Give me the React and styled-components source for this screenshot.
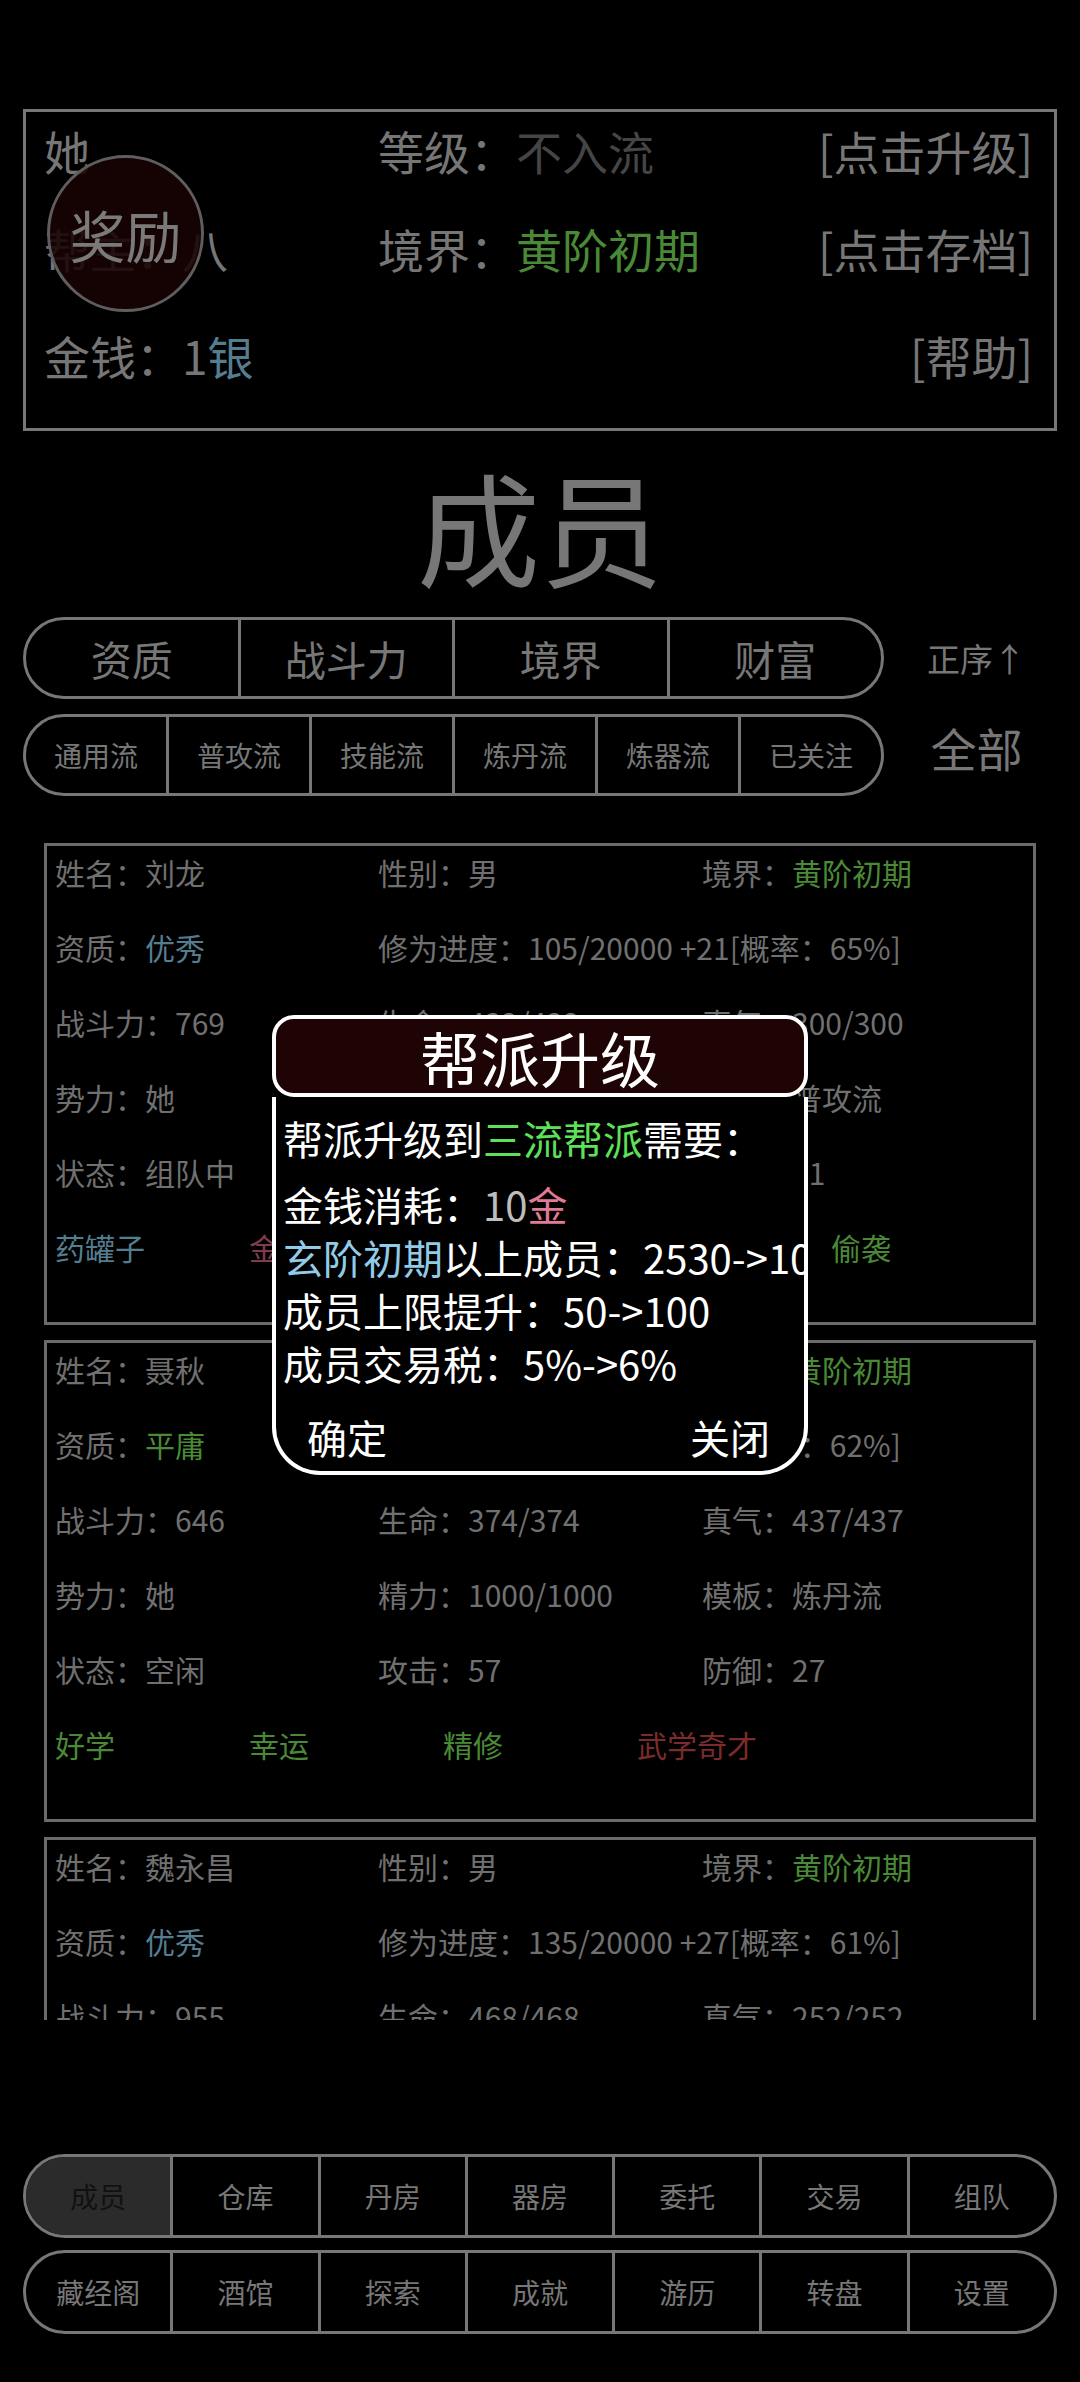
import React from "react";
import styled, { createGlobalStyle } from "styled-components";

const GlobalStyle = createGlobalStyle`
  html, body { margin: 0; padding: 0; background: #000; }
  body { font-family: "Noto Sans CJK SC", "Noto Sans", sans-serif; }
  * { box-sizing: border-box; }
`;

const C = {
  gray: "#767676",
  dim: "#454545",
  green: "#4a8a36",
  blue: "#557d90",
  pink: "#7e3c4c",
  red: "#7c2b2b",
};

const Page = styled.div`
  position: relative;
  width: 1080px;
  height: 2382px;
  padding: 109px 23px 0;
  background: #000;
  color: ${C.gray};
  overflow: hidden;
`;

const InfoBox = styled.div`
  position: relative;
  height: 322px;
  border: 3px solid #777;
  padding: 9px 21px 0 18px;
  display: grid;
  grid-template-columns: 334px 1fr auto;
  grid-template-rows: 98px 107px 58px;
  font-size: 46px;
  line-height: 58px;
  white-space: nowrap;
`;

const RightCell = styled.div`
  text-align: right;
`;

const Tone = styled.span`
  color: ${(p) => p.$c || "inherit"};
`;

const Reward = styled.div`
  position: absolute;
  left: 21px;
  top: 43px;
  width: 157px;
  height: 157px;
  border-radius: 50%;
  border: 3px solid #5e5e5e;
  background: rgba(24, 3, 3, 0.88);
  display: flex;
  align-items: center;
  justify-content: center;
  font-size: 56px;
  color: #7a7a7a;
`;

const Title = styled.div`
  height: 186px;
  line-height: 186px;
  text-align: center;
  font-size: 123px;
  color: #777;
`;

const BarRow = styled.div`
  display: grid;
  grid-template-columns: 861px 1fr;
  align-items: center;
  height: 82px;
  margin-top: ${(p) => p.$mt || 0}px;
`;

const Bar = styled.div`
  display: flex;
  height: ${(p) => p.$h || 82}px;
  border: 3px solid #777;
  border-radius: 44px;
  overflow: hidden;
`;

const Segment = styled.div`
  flex: 1;
  display: flex;
  align-items: center;
  justify-content: center;
  font-size: ${(p) => p.$fs}px;
  color: ${(p) => (p.$active ? "#111" : "#777")};
  background: ${(p) => (p.$active ? "#2b2b2b" : "transparent")};
  & + & {
    border-left: 3px solid #777;
  }
`;

const SideLabel = styled.div`
  text-align: center;
  padding-left: 12px;
  margin-top: ${(p) => p.$dy || 0}px;
  font-size: ${(p) => p.$fs}px;
  color: #777;
`;

const CardList = styled.div`
  margin: 47px 21px 0;
  height: 1177px;
  overflow: hidden;
  display: flex;
  flex-direction: column;
  gap: 15px;
`;

const Card = styled.div`
  flex-shrink: 0;
  height: 482px;
  border: 3px solid #6a6a6a;
  padding-left: 8px;
  display: grid;
  grid-template-columns: 323px 324px 1fr;
  grid-auto-rows: 75px;
  align-items: start;
  font-size: 30px;
  line-height: 52px;
  color: #707070;
  white-space: nowrap;
`;

const Traits = styled.div`
  grid-column: 1 / -1;
  display: grid;
  grid-template-columns: repeat(5, 194px);
`;

const Wide = styled.div`
  grid-column: 2 / -1;
`;

const Nav = styled.div`
  margin-top: 134px;
  display: flex;
  flex-direction: column;
  gap: 12px;
`;

const Modal = styled.div`
  position: absolute;
  left: 272px;
  top: 1015px;
  width: 536px;
  color: #fff;
`;

const ModalHead = styled.div`
  height: 82px;
  border: 4px solid #fff;
  border-radius: 22px;
  background: #1e0404;
  display: flex;
  align-items: center;
  justify-content: center;
  font-size: 60px;
  font-weight: 400;
`;

const ModalBody = styled.div`
  border: 4px solid #fff;
  border-top: none;
  border-radius: 0 0 48px 48px;
  background: #000;
  padding: 15px 0 7px 7px;
  overflow: hidden;
  white-space: nowrap;
  font-size: 40px;
  line-height: 53px;
`;

const Line = styled.div`
  margin-top: ${(p) => p.$mt || 0}px;
`;

const Buttons = styled.div`
  margin-top: 21px;
  display: flex;
  justify-content: space-between;
  padding: 0 34px 0 24px;
`;

const members = [
  {
    name: "刘龙", sex: "男", realm: "黄阶初期",
    apt: ["优秀", C.blue], prog: "105/20000 +21[概率：65%]",
    power: 769, hp: "432/432", qi: "300/300",
    energy: "1000/1000", tpl: "普攻流", state: "组队中", atk: 63, def: 31,
    traits: [["药罐子", C.blue], ["金钟罩", C.pink], ["精修", C.green], ["好学", C.green], ["偷袭", C.green]],
  },
  {
    name: "聂秋", sex: "男", realm: "黄阶初期",
    apt: ["平庸", C.green], prog: "110/20000 +18[概率：62%]",
    power: 646, hp: "374/374", qi: "437/437",
    energy: "1000/1000", tpl: "炼丹流", state: "空闲", atk: 57, def: 27,
    traits: [["好学", C.green], ["幸运", C.green], ["精修", C.green], ["武学奇才", C.red]],
  },
  {
    name: "魏永昌", sex: "男", realm: "黄阶初期",
    apt: ["优秀", C.blue], prog: "135/20000 +27[概率：61%]",
    power: 955, hp: "468/468", qi: "252/252",
    energy: "1000/1000", tpl: "技能流", state: "空闲", atk: 72, def: 30,
    traits: [["聪慧", C.green], ["坚韧", C.green]],
  },
];

const navTop = ["成员", "仓库", "丹房", "器房", "委托", "交易", "组队"];
const navBottom = ["藏经阁", "酒馆", "探索", "成就", "游历", "转盘", "设置"];

const MemberCard = ({ m }) => (
  <Card>
    <div>姓名：{m.name}</div>
    <div>性别：{m.sex}</div>
    <div>境界：<Tone $c={C.green}>{m.realm}</Tone></div>
    <div>资质：<Tone $c={m.apt[1]}>{m.apt[0]}</Tone></div>
    <Wide>修为进度：{m.prog}</Wide>
    <div>战斗力：{m.power}</div>
    <div>生命：{m.hp}</div>
    <div>真气：{m.qi}</div>
    <div>势力：她</div>
    <div>精力：{m.energy}</div>
    <div>模板：{m.tpl}</div>
    <div>状态：{m.state}</div>
    <div>攻击：{m.atk}</div>
    <div>防御：{m.def}</div>
    <Traits>
      {m.traits.map(([t, c]) => (
        <Tone key={t} $c={c}>{t}</Tone>
      ))}
    </Traits>
  </Card>
);

export default function App() {
  return (
    <Page>
      <GlobalStyle />
      <InfoBox>
        <div>她</div>
        <div>等级：<Tone $c={C.dim}>不入流</Tone></div>
        <RightCell>[点击升级]</RightCell>
        <div>帮主：八</div>
        <div>境界：<Tone $c={C.green}>黄阶初期</Tone></div>
        <RightCell>[点击存档]</RightCell>
        <div>金钱：1<Tone $c={C.blue}>银</Tone></div>
        <div />
        <RightCell>[帮助]</RightCell>
        <Reward>奖励</Reward>
      </InfoBox>

      <Title>成员</Title>

      <BarRow>
        <Bar>
          {["资质", "战斗力", "境界", "财富"].map((t) => (
            <Segment key={t} $fs={41}>{t}</Segment>
          ))}
        </Bar>
        <SideLabel $fs={33}>正序↑</SideLabel>
      </BarRow>
      <BarRow $mt={15}>
        <Bar>
          {["通用流", "普攻流", "技能流", "炼丹流", "炼器流", "已关注"].map((t) => (
            <Segment key={t} $fs={28}>{t}</Segment>
          ))}
        </Bar>
        <SideLabel $fs={46} $dy={-16}>全部</SideLabel>
      </BarRow>

      <CardList>
        {members.map((m) => (
          <MemberCard key={m.name} m={m} />
        ))}
      </CardList>

      <Nav>
        <Bar $h={84}>
          {navTop.map((t, i) => (
            <Segment key={t} $fs={28} $active={i === 0}>{t}</Segment>
          ))}
        </Bar>
        <Bar $h={84}>
          {navBottom.map((t) => (
            <Segment key={t} $fs={28}>{t}</Segment>
          ))}
        </Bar>
      </Nav>

      <Modal>
        <ModalHead>帮派升级</ModalHead>
        <ModalBody>
          <Line>帮派升级到<Tone $c="#5fe05a">三流帮派</Tone>需要：</Line>
          <Line $mt={13}>金钱消耗：<Tone $c="#bdbdbd">10</Tone><Tone $c="#e27a93">金</Tone></Line>
          <Line><Tone $c="#92cbe8">玄阶初期</Tone>以上成员：2530-&gt;10</Line>
          <Line>成员上限提升：50-&gt;100</Line>
          <Line>成员交易税：5%-&gt;6%</Line>
          <Buttons>
            <span>确定</span>
            <span>关闭</span>
          </Buttons>
        </ModalBody>
      </Modal>
    </Page>
  );
}
